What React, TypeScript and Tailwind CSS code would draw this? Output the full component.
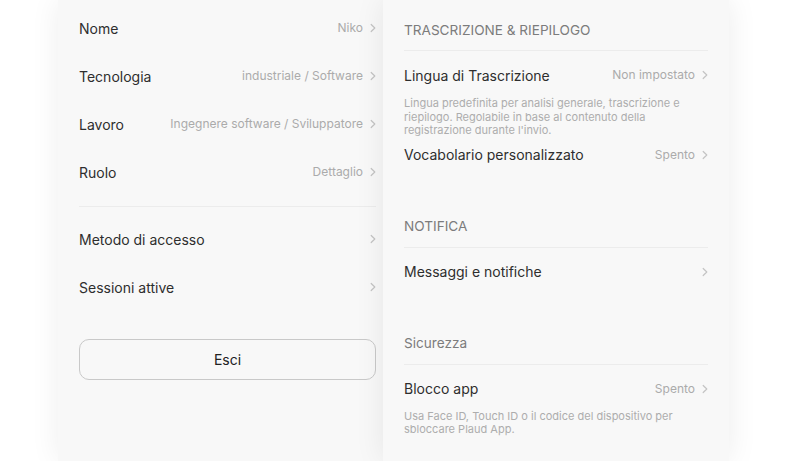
import React from "react";

const font = { fontFamily: "Inter, 'Noto Sans', sans-serif" };

function Chevron() {
  return (
    <svg width="6" height="10" viewBox="0 0 6 10" className="shrink-0">
      <path d="M1.2 1.5 L4.8 5 L1.2 8.5" fill="none" stroke="#c4c4c4" strokeWidth="1.2" strokeLinecap="round" strokeLinejoin="round" />
    </svg>
  );
}

function Row({ label, value, h = "h-[48px]" }: { label: string; value?: string; h?: string }) {
  return (
    <div className={`flex items-center justify-between ${h}`}>
      <span className="text-[14px] text-[#2e2e2e]">{label}</span>
      <div className="flex items-center gap-[7px]">
        {value && <span className="text-[12px] text-[#ababab]">{value}</span>}
        <Chevron />
      </div>
    </div>
  );
}

function Header({ text }: { text: string }) {
  return (
    <div className="flex items-center h-[40px] border-b border-[#ececec] box-content">
      <span className="text-[13.6px] text-[#7c7c7c]">{text}</span>
    </div>
  );
}

export default function App() {
  return (
    <div className="w-[787px] h-[461px] bg-white overflow-hidden flex" style={font}>
      <div className="ml-[58px] w-[339px] h-[461px] bg-[#f8f8f8] px-[21px] pt-[4px] shadow-[0_0_28px_rgba(0,0,0,0.07)] shrink-0">
        <Row label="Nome" value="Niko" />
        <Row label="Tecnologia" value="industriale / Software" />
        <Row label="Lavoro" value="Ingegnere software / Sviluppatore" />
        <Row label="Ruolo" value="Dettaglio" />
        <div className="mt-[10px] h-px bg-[#ececec]" />
        <div className="mt-[8px]">
          <Row label="Metodo di accesso" />
          <Row label="Sessioni attive" />
        </div>
        <button className="mt-[28px] w-full h-[41px] rounded-[10px] border border-[#c9c9c9] text-[14px] text-[#222] flex items-center justify-center">
          Esci
        </button>
      </div>
      <div className="-ml-[14px] relative z-10 w-[346px] h-[461px] bg-[#f8f8f8] px-[21px] pt-[10px] shadow-[0_0_28px_rgba(0,0,0,0.08)] shrink-0">
        <Header text="TRASCRIZIONE & RIEPILOGO" />
        <div className="mt-[4px]">
          <Row label="Lingua di Trascrizione" value="Non impostato" h="h-[40px]" />
        </div>
        <p className="pt-[2px] text-[11px] leading-[13.5px] text-[#adadad] pr-[20px]">
          Lingua predefinita per analisi generale, trascrizione e riepilogo. Regolabile in base al contenuto della registrazione durante l'invio.
        </p>
        <Row label="Vocabolario personalizzato" value="Spento" h="h-[34px]" />
        <div className="mt-[35px]">
          <Header text="NOTIFICA" />
        </div>
        <Row label="Messaggi e notifiche" />
        <div className="mt-[28px]">
          <Header text="Sicurezza" />
        </div>
        <div className="mt-[4px]">
          <Row label="Blocco app" value="Spento" h="h-[40px]" />
        </div>
        <p className="pt-[1px] text-[11px] leading-[13.5px] text-[#adadad] pr-[20px]">
          Usa Face ID, Touch ID o il codice del dispositivo per sbloccare Plaud App.
        </p>
      </div>
    </div>
  );
}
